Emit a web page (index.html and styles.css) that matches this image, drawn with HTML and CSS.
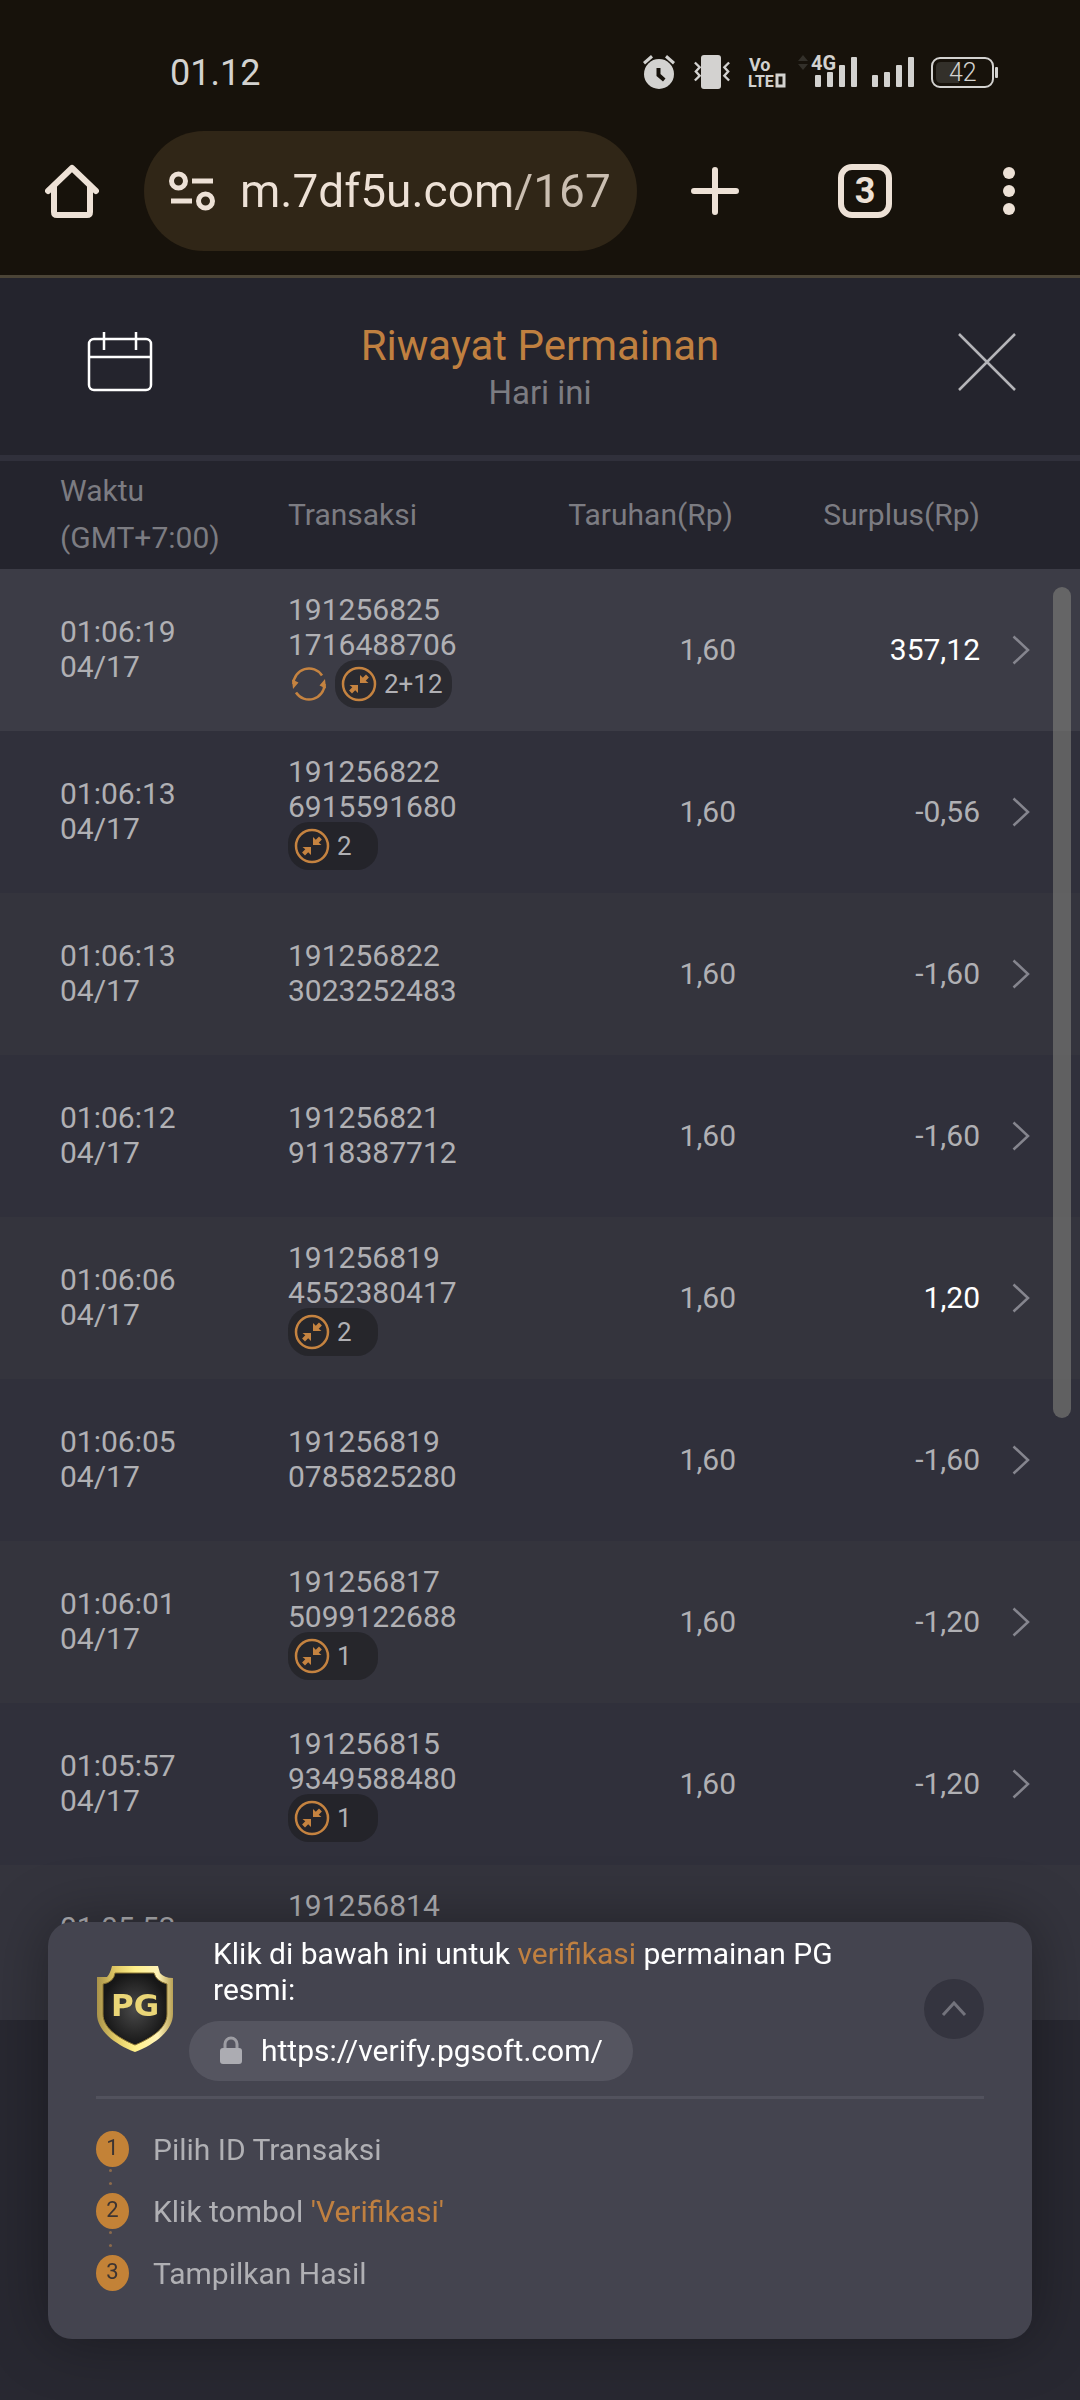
FILE: index.html
```
<!DOCTYPE html>
<html lang="id">
<head>
    <meta charset="UTF-8">
    <meta name="viewport" content="width=device-width, initial-scale=1.0">
    <title>Riwayat Permainan</title>
    <link rel="stylesheet" href="styles.css">
</head>
<body>
    <!-- Shared icons -->
    <svg class="sprite" width="0" height="0" aria-hidden="true">
        <symbol id="icon-collapse" viewBox="0 0 36 36">
            <circle cx="18" cy="18" r="16" fill="none" stroke="#c58340" stroke-width="2.5"/>
            <path d="M19 17V9l2.800 2.800 3.200-3.200 2.900 2.900-3.200 3.200 2.800 2.300zM17 19V27l-2.800-2.800-3.200 3.200-2.900-2.900 3.200-3.200-2.800-2.300z" fill="#c58340"/>
        </symbol>
        <symbol id="icon-free" viewBox="0 0 36 36">
            <path d="M2.500 18A15.500 15.500 0 0 1 31 9.500M33.500 18A15.500 15.500 0 0 1 5 26.500" fill="none" stroke="#c58340" stroke-width="2.500"/>
            <path d="M1 13.500l1 9.500 5.500-6.500zM35 22.500l-1-9.500-5.500 6.500z" fill="#c58340"/>
        </symbol>
        <symbol id="icon-next" viewBox="0 0 18 30">
            <path d="M1.500 1.500L16 15 1.500 28.500" fill="none" stroke="#85858e" stroke-width="2.500"/>
        </symbol>
    </svg>

    <div class="status-bar">
        <span class="clock">01.12</span>
        <svg class="status-icons" width="360" height="46" viewBox="640 50 360 46" aria-hidden="true">
            <g fill="#d3d2d0">
                <circle cx="659" cy="74" r="15"/>
                <path d="M643 62l8-7 2 2.500-8 7zM675 62l-8-7-2 2.500 8 7z"/>
                <path d="M656.500 68h4v6l5 4.500-2.500 3-6.500-5.500z" fill="#17120b"/>
                <rect x="701" y="55" width="20" height="34" rx="3"/>
                <path d="M694 62l5 5-4 4.500 4 4.500-5 5M730 62l-5 5 4 4.500-4 4.500 5 5" transform="translate(712 71.500) scale(.95) translate(-712 -71.500)" fill="none" stroke="#d3d2d0" stroke-width="2.500"/>
                <text class="vo" x="749" y="71">Vo</text>
                <text class="lte" x="748" y="87">LTE</text>
                <rect x="777" y="75" width="7" height="11" fill="none" stroke="#d3d2d0" stroke-width="3"/>
                <path d="M798 61l5-6 5 6zM798 64l5 6 5-6z" fill="#33302a"/>
                <text class="net" x="811" y="70">4G</text>
                <rect x="815" y="75" width="6" height="12" rx="1"/>
                <rect x="827" y="72" width="6" height="15" rx="1"/>
                <rect x="839" y="65" width="6" height="22" rx="1"/>
                <rect x="851" y="57" width="6" height="30" rx="1"/>
                <rect x="872" y="75" width="6" height="12" rx="1"/>
                <rect x="884" y="72" width="6" height="15" rx="1"/>
                <rect x="896" y="65" width="6" height="22" rx="1"/>
                <rect x="908" y="57" width="6" height="30" rx="1"/>
                <rect x="932" y="58" width="61" height="29" rx="8" fill="none" stroke="#d3d2d0" stroke-width="2"/>
                <path d="M941 62h18v21h-18q-5 0-5-5V67q0-5 5-5z" fill="#33302a"/>
                <rect x="995" y="67" width="3" height="11" rx="1"/>
                <text class="charge" x="949" y="81">42</text>
            </g>
        </svg>
    </div>

    <div class="browser-bar">
        <button class="bar-btn" aria-label="Beranda">
            <svg width="54" height="54" viewBox="0 0 54 54" fill="none" stroke="#ede1d6" stroke-width="6" stroke-linejoin="round" stroke-linecap="round"><path d="M3 27L27 4l24 23M9 23v25q0 3 3 3h30q3 0 3-3V23"/></svg>
        </button>
        <div class="address">
            <svg width="46" height="40" viewBox="0 0 46 40" fill="none" stroke="#ede1d6" stroke-width="5"><circle cx="9.500" cy="10" r="7"/><path d="M23 10h21M2 30h21"/><circle cx="36.500" cy="30" r="7"/></svg>
            <input class="address-input" type="text" value="m.7df5u.com/1671" aria-label="Alamat situs">
        </div>
        <div class="bar-actions">
            <button class="bar-btn" aria-label="Tab baru">
                <svg width="48" height="48" viewBox="0 0 48 48" stroke="#ede1d6" stroke-width="6" stroke-linecap="round"><path d="M24 3v42M3 24h42"/></svg>
            </button>
            <button class="bar-btn tabs-btn">3</button>
            <button class="bar-btn" aria-label="Menu">
                <svg width="12" height="48" viewBox="0 0 12 48" fill="#ede1d6"><circle cx="6" cy="6" r="6"/><circle cx="6" cy="24" r="6"/><circle cx="6" cy="42" r="6"/></svg>
            </button>
        </div>
    </div>

    <header class="page-header">
        <button class="header-btn" aria-label="Kalender">
            <svg width="66" height="60" viewBox="0 0 66 60" fill="none" stroke="#fff" stroke-width="2.500"><rect x="2" y="7" width="62" height="51" rx="5"/><path d="M2 25h62M17 0v18M49 0v18"/></svg>
        </button>
        <div class="header-title">
            <h1>Riwayat Permainan</h1>
            <p>Hari ini</p>
        </div>
        <button class="header-btn close-btn" aria-label="Tutup">
            <svg width="58" height="58" viewBox="0 0 58 58" fill="none" stroke="#b5b5b9" stroke-width="2.500"><path d="M1 1l56 56M57 1L1 57"/></svg>
        </button>
    </header>

    <main class="history">
        <table class="history-table">
            <thead>
                <tr>
                    <th class="time">Waktu<br>(GMT+7:00)</th>
                    <th class="trans">Transaksi</th>
                    <th class="bet">Taruhan(Rp)</th>
                    <th class="profit">Surplus(Rp)</th>
                    <th class="more"></th>
                </tr>
            </thead>
            <tbody>
                <tr class="selected">
                    <td class="time">01:06:19<br>04/17</td>
                    <td class="trans">191256825<br>1716488706
                        <div class="badges">
                            <svg class="free-icon"><use href="#icon-free"/></svg>
                            <span class="badge"><svg><use href="#icon-collapse"/></svg>2+12</span>
                        </div>
                    </td>
                    <td class="bet">1,60</td>
                    <td class="profit win">357,12</td>
                    <td class="more"><button aria-label="Detail"><svg><use href="#icon-next"/></svg></button></td>
                </tr>
                <tr>
                    <td class="time">01:06:13<br>04/17</td>
                    <td class="trans">191256822<br>6915591680
                        <div class="badges"><span class="badge"><svg><use href="#icon-collapse"/></svg>2</span></div>
                    </td>
                    <td class="bet">1,60</td>
                    <td class="profit">-0,56</td>
                    <td class="more"><button aria-label="Detail"><svg><use href="#icon-next"/></svg></button></td>
                </tr>
                <tr>
                    <td class="time">01:06:13<br>04/17</td>
                    <td class="trans">191256822<br>3023252483</td>
                    <td class="bet">1,60</td>
                    <td class="profit">-1,60</td>
                    <td class="more"><button aria-label="Detail"><svg><use href="#icon-next"/></svg></button></td>
                </tr>
                <tr>
                    <td class="time">01:06:12<br>04/17</td>
                    <td class="trans">191256821<br>9118387712</td>
                    <td class="bet">1,60</td>
                    <td class="profit">-1,60</td>
                    <td class="more"><button aria-label="Detail"><svg><use href="#icon-next"/></svg></button></td>
                </tr>
                <tr>
                    <td class="time">01:06:06<br>04/17</td>
                    <td class="trans">191256819<br>4552380417
                        <div class="badges"><span class="badge"><svg><use href="#icon-collapse"/></svg>2</span></div>
                    </td>
                    <td class="bet">1,60</td>
                    <td class="profit win">1,20</td>
                    <td class="more"><button aria-label="Detail"><svg><use href="#icon-next"/></svg></button></td>
                </tr>
                <tr>
                    <td class="time">01:06:05<br>04/17</td>
                    <td class="trans">191256819<br>0785825280</td>
                    <td class="bet">1,60</td>
                    <td class="profit">-1,60</td>
                    <td class="more"><button aria-label="Detail"><svg><use href="#icon-next"/></svg></button></td>
                </tr>
                <tr>
                    <td class="time">01:06:01<br>04/17</td>
                    <td class="trans">191256817<br>5099122688
                        <div class="badges"><span class="badge"><svg><use href="#icon-collapse"/></svg>1</span></div>
                    </td>
                    <td class="bet">1,60</td>
                    <td class="profit">-1,20</td>
                    <td class="more"><button aria-label="Detail"><svg><use href="#icon-next"/></svg></button></td>
                </tr>
                <tr>
                    <td class="time">01:05:57<br>04/17</td>
                    <td class="trans">191256815<br>9349588480
                        <div class="badges"><span class="badge"><svg><use href="#icon-collapse"/></svg>1</span></div>
                    </td>
                    <td class="bet">1,60</td>
                    <td class="profit">-1,20</td>
                    <td class="more"><button aria-label="Detail"><svg><use href="#icon-next"/></svg></button></td>
                </tr>
                <tr class="loading">
                    <td class="time">01:05:53</td>
                    <td class="trans">191256814</td>
                    <td class="bet"></td>
                    <td class="profit"></td>
                    <td class="more"></td>
                </tr>
            </tbody>
        </table>
        <div class="scroll-thumb"></div>
    </main>

    <section class="verify-card">
        <div class="verify-top">
            <svg class="shield" width="78" height="88" viewBox="0 0 78 88" aria-hidden="true">
                <defs>
                    <linearGradient id="gold" x1="0" y1="0" x2="1" y2="0">
                        <stop offset="0" stop-color="#a8924a"/>
                        <stop offset=".25" stop-color="#e3cb66"/>
                        <stop offset=".5" stop-color="#fff08a"/>
                        <stop offset=".8" stop-color="#fff3b8"/>
                        <stop offset="1" stop-color="#b9a256"/>
                    </linearGradient>
                    <radialGradient id="dark">
                        <stop offset="0" stop-color="#4a4a4a"/>
                        <stop offset="1" stop-color="#171717"/>
                    </radialGradient>
                </defs>
                <path d="M16 1h46l2 7q4 5 13 5v36c0 16-17 30-38 38C18 79 1 65 1 49V12h10q3-3 5-11z" fill="url(#gold)"/>
                <path d="M19 8h39q2 8 13 11v30c0 13-13 23-32 31C20 72 7 62 7 49V19q11-2 12-11z" fill="url(#dark)" stroke="#8a7434" stroke-width="1"/>
                <text class="shield-text" x="39" y="51" text-anchor="middle">PG</text>
            </svg>
            <div class="verify-info">
                <p>Klik di bawah ini untuk <span class="accent">verifikasi</span> permainan PG resmi:</p>
                <a class="verify-link" href="https://verify.pgsoft.com/">
                    <svg width="24" height="28" viewBox="0 0 24 28" aria-hidden="true"><path d="M6 13V8a6 6 0 0 1 12 0v5" fill="none" stroke="#9d9da3" stroke-width="3"/><rect x="1" y="12" width="22" height="16" rx="3" fill="#acacb2"/></svg>
                    https://verify.pgsoft.com/
                </a>
            </div>
            <button class="toggle-btn" aria-label="Ciutkan">
                <svg width="26" height="16" viewBox="0 0 26 16" fill="none" stroke="#73737c" stroke-width="3"><path d="M2 14L13 2l11 12"/></svg>
            </button>
        </div>
        <ol class="steps">
            <li><span class="step-no">1</span>Pilih ID Transaksi</li>
            <li><span class="step-no">2</span><span>Klik tombol <span class="accent">'Verifikasi'</span></span></li>
            <li><span class="step-no">3</span>Tampilkan Hasil</li>
        </ol>
    </section>
</body>
</html>
```
FILE: styles.css
```
:root {
    --chrome-bg: #17120b;
    --chrome-fg: #ede1d6;
    --page-bg: #282831;
    --header-bg: #24242d;
    --row-odd: #34343d;
    --row-even: #30303b;
    --accent: #c08040;
    --text: #b0b0b4;
    --text-dim: #7c7c82;
}

* {
    margin: 0;
    padding: 0;
    box-sizing: border-box;
    font-family: Roboto, "Noto Sans", sans-serif;
}

body {
    display: flex;
    flex-direction: column;
    height: 100vh;
    overflow: hidden;
    background: var(--page-bg);
    color: var(--text);
    font-size: 30px;
    line-height: 35px;
}

button {
    background: none;
    border: none;
    cursor: pointer;
}

svg {
    display: block;
}

.sprite {
    position: absolute;
}

.accent {
    color: var(--accent);
}

/* phone status bar */
.status-bar {
    display: flex;
    justify-content: space-between;
    align-items: center;
    padding: 50px 80px 35px 170px;
    background: var(--chrome-bg);
    color: #d3d2d0;
}

.clock {
    font-size: 36px;
    line-height: 46px;
}

.vo {
    font-size: 18px;
    font-weight: 700;
}

.lte {
    font-size: 16px;
    font-weight: 700;
}

.net {
    font-size: 20px;
    font-weight: 700;
}

.charge {
    font-size: 25px;
    font-weight: 300;
}

/* browser toolbar */
.browser-bar {
    display: flex;
    align-items: center;
    padding: 0 65px 24px 45px;
    background: var(--chrome-bg);
    border-bottom: 3px solid #4b4437;
}

.address {
    flex: 1;
    min-width: 0;
    display: flex;
    align-items: center;
    gap: 25px;
    height: 120px;
    margin: 0 54px 0 45px;
    padding: 0 24px 0 25px;
    border-radius: 60px;
    background: #302617;
}

.address svg {
    flex-shrink: 0;
}

.address-input {
    flex: 1;
    min-width: 0;
    height: 64px;
    border: none;
    outline: none;
    font-size: 46px;
    background: linear-gradient(90deg, var(--chrome-fg) 270px, #cabeb1 270px);
    -webkit-background-clip: text;
    background-clip: text;
    -webkit-text-fill-color: transparent;
}

.bar-actions {
    display: flex;
    flex-shrink: 0;
    align-items: center;
}

.tabs-btn {
    width: 54px;
    height: 54px;
    margin: 0 111px 0 99px;
    border: 6px solid var(--chrome-fg);
    border-radius: 14px;
    color: var(--chrome-fg);
    font-size: 36px;
    line-height: 42px;
    font-weight: 700;
}

/* page header */
.page-header {
    display: grid;
    grid-template-columns: 1fr auto 1fr;
    align-items: center;
    padding: 29px 64px 38px;
    background: var(--header-bg);
    border-bottom: 6px solid #30303b;
}

.header-btn {
    justify-self: start;
    margin-left: 23px;
}

.close-btn {
    justify-self: end;
}

.header-title {
    text-align: center;
    padding-top: 16px;
}

.header-title h1 {
    color: var(--accent);
    font-size: 42px;
    font-weight: 400;
    line-height: 46px;
}

.header-title p {
    color: var(--text-dim);
    font-size: 33px;
    line-height: 48px;
}

/* history list */
.history {
    flex: 1;
    min-height: 0;
    margin-bottom: 380px;
    overflow: hidden;
    position: relative;
}

.history-table {
    width: 100%;
    border-collapse: collapse;
    table-layout: fixed;
}

th {
    height: 108px;
    padding-bottom: 2px;
    background: var(--header-bg);
    color: var(--text-dim);
    font-weight: 400;
    line-height: 47px;
    text-align: left;
}

td {
    height: 162px;
    padding-bottom: 2px;
}

tbody tr:nth-child(odd) {
    background: var(--row-odd);
}

tbody tr:nth-child(even) {
    background: var(--row-even);
}

tbody tr.selected {
    background: #3c3c46;
}

/* row still being filled in under the card */
.loading .time {
    padding-bottom: 37px;
}

.loading .trans {
    padding-bottom: 81px;
}

.time {
    width: 288px;
    padding-left: 60px;
}

.bet {
    width: 221px;
    text-align: right;
}

th.bet {
    padding-right: 3px;
}

.profit {
    width: 244px;
    text-align: right;
}

.win {
    color: #fff;
}

.more {
    width: 100px;
    padding-left: 32px;
}

td.more {
    padding-bottom: 0;
}

.more button {
    display: block;
}

.more svg {
    width: 18px;
    height: 30px;
}

.badges {
    display: flex;
    align-items: center;
    gap: 8px;
    height: 44px;
}

.free-icon {
    width: 36px;
    height: 36px;
    margin-left: 3px;
}

.badge {
    display: flex;
    align-items: center;
    gap: 7px;
    min-width: 90px;
    height: 48px;
    padding: 0 9px 0 6px;
    border-radius: 21px;
    background: rgba(24, 24, 26, 0.5);
    font-size: 26px;
}

.badge svg {
    width: 36px;
    height: 36px;
}

.scroll-thumb {
    position: absolute;
    top: 126px;
    right: 9px;
    width: 18px;
    height: 53.3%;
    border-radius: 9px;
    background: rgba(128, 128, 124, 0.6);
}

/* verification card */
.verify-card {
    position: fixed;
    left: 48px;
    right: 48px;
    bottom: 61px;
    padding: 14px 48px 48px;
    border-radius: 24px;
    background: #44444f;
    box-shadow: 0 0 60px rgba(0, 0, 0, 0.35);
}

.verify-top {
    display: flex;
    align-items: center;
    padding-bottom: 15px;
    border-bottom: 3px solid #52525d;
}

.shield-text {
    font-family: "DejaVu Sans", sans-serif;
    font-size: 31px;
    font-weight: 700;
    fill: #ead677;
}

.verify-info {
    flex: 1;
    margin: 0 60px 0 15px;
    color: #fff;
}

.verify-info p {
    padding-left: 24px;
    line-height: 36px;
    margin-bottom: 13px;
}

.verify-link {
    display: inline-flex;
    align-items: center;
    gap: 18px;
    height: 60px;
    padding: 0 30px 2px;
    border-radius: 30px;
    background: #555560;
    color: #fff;
    text-decoration: none;
    vertical-align: top;
}

.toggle-btn {
    display: flex;
    align-items: center;
    justify-content: center;
    width: 60px;
    height: 60px;
    border-radius: 50%;
    background: #34343f;
}

.steps {
    display: flex;
    flex-direction: column;
    gap: 26px;
    padding-top: 32px;
    list-style: none;
}

.steps li {
    display: flex;
    align-items: center;
    gap: 24px;
    height: 36px;
    position: relative;
}

.step-no {
    width: 33px;
    height: 36px;
    border-radius: 50%;
    background: #c38237;
    color: #3c3432;
    font-size: 22px;
    line-height: 34px;
    text-align: center;
}

/* dotted connector between the numbers */
.steps li:not(:last-child)::after {
    content: '';
    position: absolute;
    left: 13px;
    top: 38px;
    width: 3px;
    height: 3px;
    border-radius: 50%;
    background: #8b6a4c;
    box-shadow: 0 13px #8b6a4c;
}
```
